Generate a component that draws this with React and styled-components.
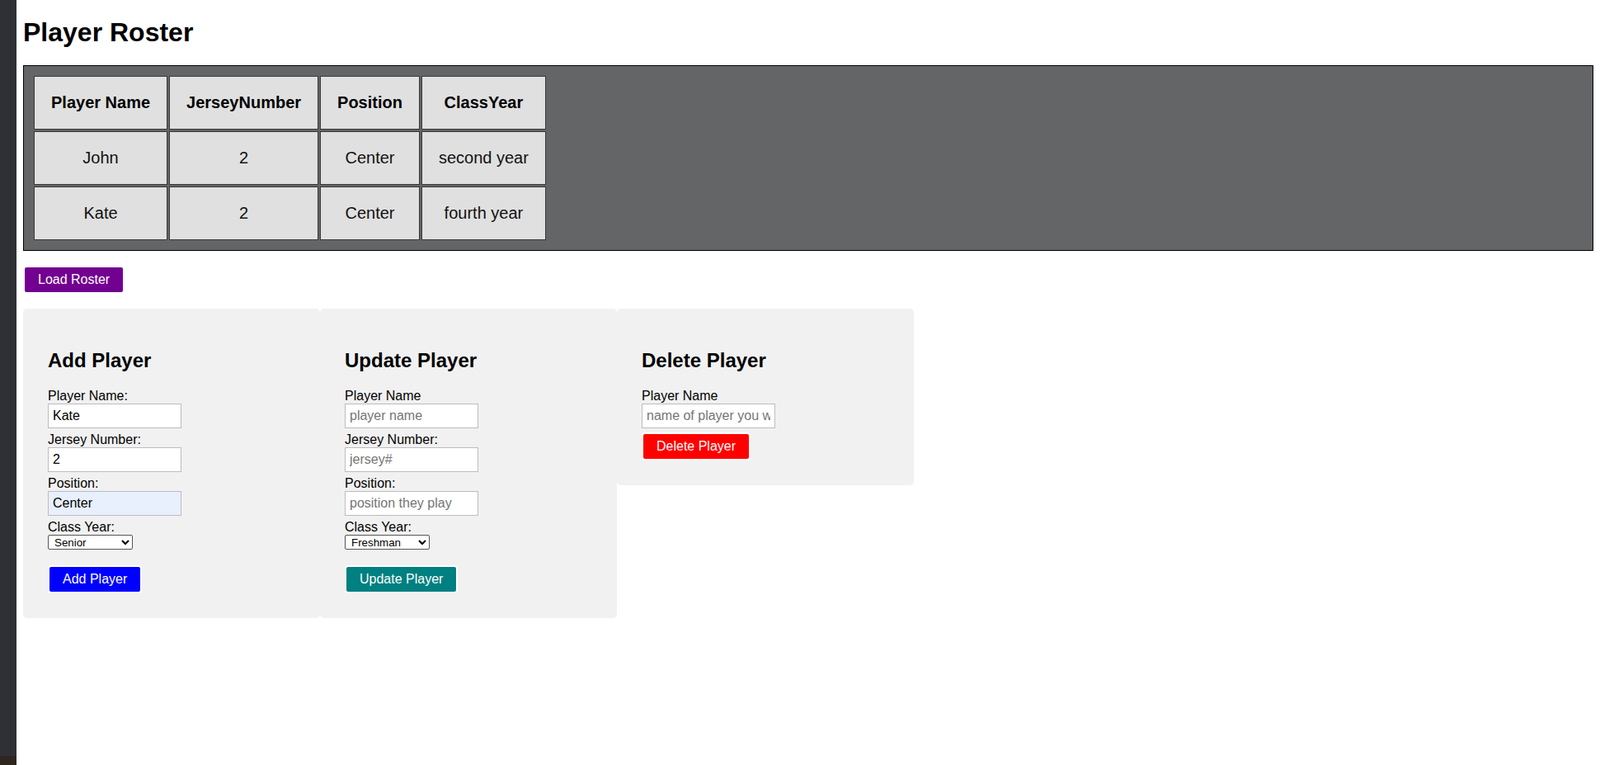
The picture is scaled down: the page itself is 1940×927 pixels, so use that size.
import React, { useState } from "react";
import styled, { createGlobalStyle } from "styled-components";

const GlobalStyle = createGlobalStyle`
  body {
    margin: 0;
    background: #ffffff;
    font-family: "Liberation Sans", Arial, sans-serif;
    color: #000000;
  }
`;

const roster = [
  { name: "John", jersey: 2, position: "Center", classYear: "second year" },
  { name: "Kate", jersey: 2, position: "Center", classYear: "fourth year" },
];

const years = ["Freshman", "Sophomore", "Junior", "Senior"];

function App() {
  const [addForm, setAddForm] = useState({
    name: "Kate",
    jersey: "2",
    position: "Center",
    classYear: "Senior",
  });

  const update = (key) => (e) => setAddForm({ ...addForm, [key]: e.target.value });

  return (
    <>
      <GlobalStyle />
      <Shell>
        <SideStrip>
          <StripFoot />
        </SideStrip>
        <Main>
          <Title>Player Roster</Title>
          <RosterBox>
            <RosterTable>
              <thead>
                <tr>
                  <HeadCell>Player Name</HeadCell>
                  <HeadCell>JerseyNumber</HeadCell>
                  <HeadCell>Position</HeadCell>
                  <HeadCell>ClassYear</HeadCell>
                </tr>
              </thead>
              <tbody>
                {roster.map((p) => (
                  <tr key={p.name}>
                    <Cell>{p.name}</Cell>
                    <Cell>{p.jersey}</Cell>
                    <Cell>{p.position}</Cell>
                    <Cell>{p.classYear}</Cell>
                  </tr>
                ))}
              </tbody>
            </RosterTable>
          </RosterBox>

          <ButtonRow>
            <ActionButton $color="#720090">Load Roster</ActionButton>
          </ButtonRow>

          <Panels>
            <Panel>
              <PanelTitle>Add Player</PanelTitle>
              <Label>Player Name:</Label>
              <TextInput value={addForm.name} onChange={update("name")} />
              <Label>Jersey Number:</Label>
              <TextInput value={addForm.jersey} onChange={update("jersey")} />
              <Label>Position:</Label>
              <TextInput
                $autofill
                value={addForm.position}
                onChange={update("position")}
              />
              <Label>Class Year:</Label>
              <YearSelect value={addForm.classYear} onChange={update("classYear")}>
                {years.map((y) => (
                  <option key={y}>{y}</option>
                ))}
              </YearSelect>
              <ActionButton $color="#0000ff">Add Player</ActionButton>
            </Panel>

            <Panel>
              <PanelTitle>Update Player</PanelTitle>
              <Label>Player Name</Label>
              <TextInput placeholder="player name" />
              <Label>Jersey Number:</Label>
              <TextInput placeholder="jersey#" />
              <Label>Position:</Label>
              <TextInput placeholder="position they play" />
              <Label>Class Year:</Label>
              <YearSelect defaultValue="Freshman">
                {years.map((y) => (
                  <option key={y}>{y}</option>
                ))}
              </YearSelect>
              <ActionButton $color="#008080">Update Player</ActionButton>
            </Panel>

            <Panel>
              <PanelTitle>Delete Player</PanelTitle>
              <Label>Player Name</Label>
              <TextInput placeholder="name of player you want to delete" />
              <ActionButton $color="#ff0000">Delete Player</ActionButton>
            </Panel>
          </Panels>
        </Main>
      </Shell>
    </>
  );
}

const Shell = styled.div`
  display: flex;
  min-height: 100vh;
`;

const SideStrip = styled.div`
  width: 20px;
  flex-shrink: 0;
  background: #2f3036;
  display: flex;
  flex-direction: column;
  justify-content: flex-end;
`;

const StripFoot = styled.div`
  height: 11px;
  background: #2d2720;
`;

const Main = styled.div`
  flex: 1;
  padding: 0 8px;
`;

const Title = styled.h1`
  font-size: 32px;
  line-height: 37px;
  font-weight: bold;
  margin: 20.5px 0 21px;
`;

const RosterBox = styled.div`
  background: #646567;
  border: 1px solid #000000;
  padding: 10px;
`;

const RosterTable = styled.table`
  border-spacing: 2px;
`;

const HeadCell = styled.th`
  background: #e0e0e0;
  border: 1px solid #3a3a3a;
  padding: 20px;
  font-size: 20px;
  line-height: 23px;
  font-weight: bold;
  color: #000000;
  text-align: center;
`;

const Cell = styled.td`
  background: #e0e0e0;
  border: 1px solid #3a3a3a;
  padding: 20px;
  font-size: 20px;
  line-height: 23px;
  color: #111111;
  text-align: center;
`;

const ButtonRow = styled.div`
  margin: 18px 0;
`;

const ActionButton = styled.button`
  display: block;
  background: ${(p) => p.$color};
  color: #ffffff;
  border: 2px solid #ffffff;
  border-radius: 4px;
  padding: 6px 16px;
  font-family: "Liberation Sans", Arial, sans-serif;
  font-size: 16px;
  line-height: 18px;
  cursor: pointer;
`;

const Panels = styled.div`
  display: flex;
  align-items: flex-start;
`;

const Panel = styled.div`
  width: 300px;
  padding: 30px;
  background: #f1f1f1;
  border-radius: 5px;
`;

const PanelTitle = styled.h2`
  font-size: 24px;
  line-height: 27.6px;
  font-weight: bold;
  margin: 19.92px 0;
`;

const Label = styled.label`
  display: block;
  font-size: 16px;
  line-height: 18.4px;
  color: #000000;
`;

const TextInput = styled.input`
  display: block;
  box-sizing: border-box;
  width: 162px;
  height: 29.5px;
  margin: 0 0 5px;
  padding: 5px;
  border: 1px solid #bdbdbd;
  background: ${(p) => (p.$autofill ? "#e8f0fe" : "#ffffff")};
  font-family: "Liberation Sans", Arial, sans-serif;
  font-size: 16px;
  color: #000000;
  outline: none;

  &::placeholder {
    color: #757575;
  }
`;

const YearSelect = styled.select`
  display: block;
  box-sizing: border-box;
  width: 103px;
  height: 18px;
  margin: 0 0 19px;
  padding: 0 0 0 3px;
  border: 1px solid #555555;
  border-radius: 2px;
  background: #ffffff;
  font-family: "Liberation Sans", Arial, sans-serif;
  font-size: 13.33px;
  color: #000000;
`;

export default App;
